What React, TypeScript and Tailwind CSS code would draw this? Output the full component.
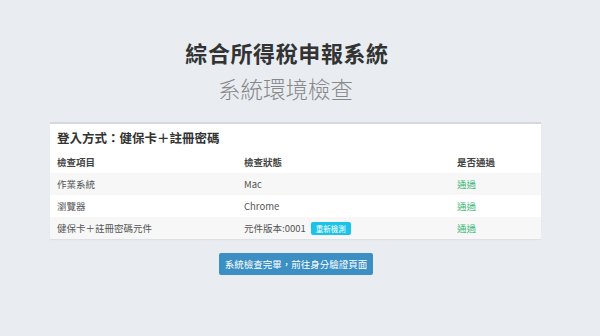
import React from "react";

const font = { fontFamily: '"Noto Sans CJK TC", "Noto Sans", sans-serif' };

export default function App() {
  const rows = [
    { item: "作業系統", status: "Mac", badge: false },
    { item: "瀏覽器", status: "Chrome", badge: false },
    { item: "健保卡＋註冊密碼元件", status: "元件版本:0001", badge: true },
  ];
  return (
    <div className="w-[600px] h-[336px] bg-[#e9edf2] flex flex-col items-center overflow-hidden" style={font}>
      <h1 className="mt-[38px] ml-[-26px] text-[22px] leading-[28px] font-bold text-[#333] tracking-[0.6px]">綜合所得稅申報系統</h1>
      <h2 className="mt-[8px] ml-[-29px] text-[22.5px] leading-[28px] text-[#888] font-light">系統環境檢查</h2>
      <div className="mt-[20px] w-[491px] ml-[-9px] bg-white border-t-[2px] border-[#d5d9de] shadow-[0_1px_1px_rgba(0,0,0,0.05)]">
        <div className="px-[7px] pt-[5px] pb-[4px] text-[12.5px] leading-[18px] font-bold text-[#333]">登入方式：健保卡＋註冊密碼</div>
        <div className="grid grid-cols-[187px_213px_1fr] px-[7px] h-[22px] items-center text-[9.5px] font-bold text-[#444]">
          <div>檢查項目</div>
          <div>檢查狀態</div>
          <div>是否通過</div>
        </div>
        {rows.map((r, i) => (
          <div
            key={i}
            className={`grid grid-cols-[187px_213px_1fr] px-[7px] h-[22px] items-center text-[9.5px] text-[#555] ${i % 2 === 0 ? "bg-[#f7f7f7]" : "bg-white"}`}
          >
            <div>{r.item}</div>
            <div className="flex items-center">
              <span>{r.status}</span>
              {r.badge && (
                <span className="ml-[5px] h-[13px] px-[5px] rounded-[2px] bg-[#1cc3e8] text-white text-[7.5px] leading-[13px]">重新檢測</span>
              )}
            </div>
            <div className="text-[#3cb878]">通過</div>
          </div>
        ))}
      </div>
      <button className="mt-[14px] ml-[-8px] h-[22px] w-[154px] rounded-[2px] bg-[#3b8fc2] text-white text-[9.5px] flex items-center justify-center">系統檢查完畢，前往身分驗證頁面</button>
    </div>
  );
}
